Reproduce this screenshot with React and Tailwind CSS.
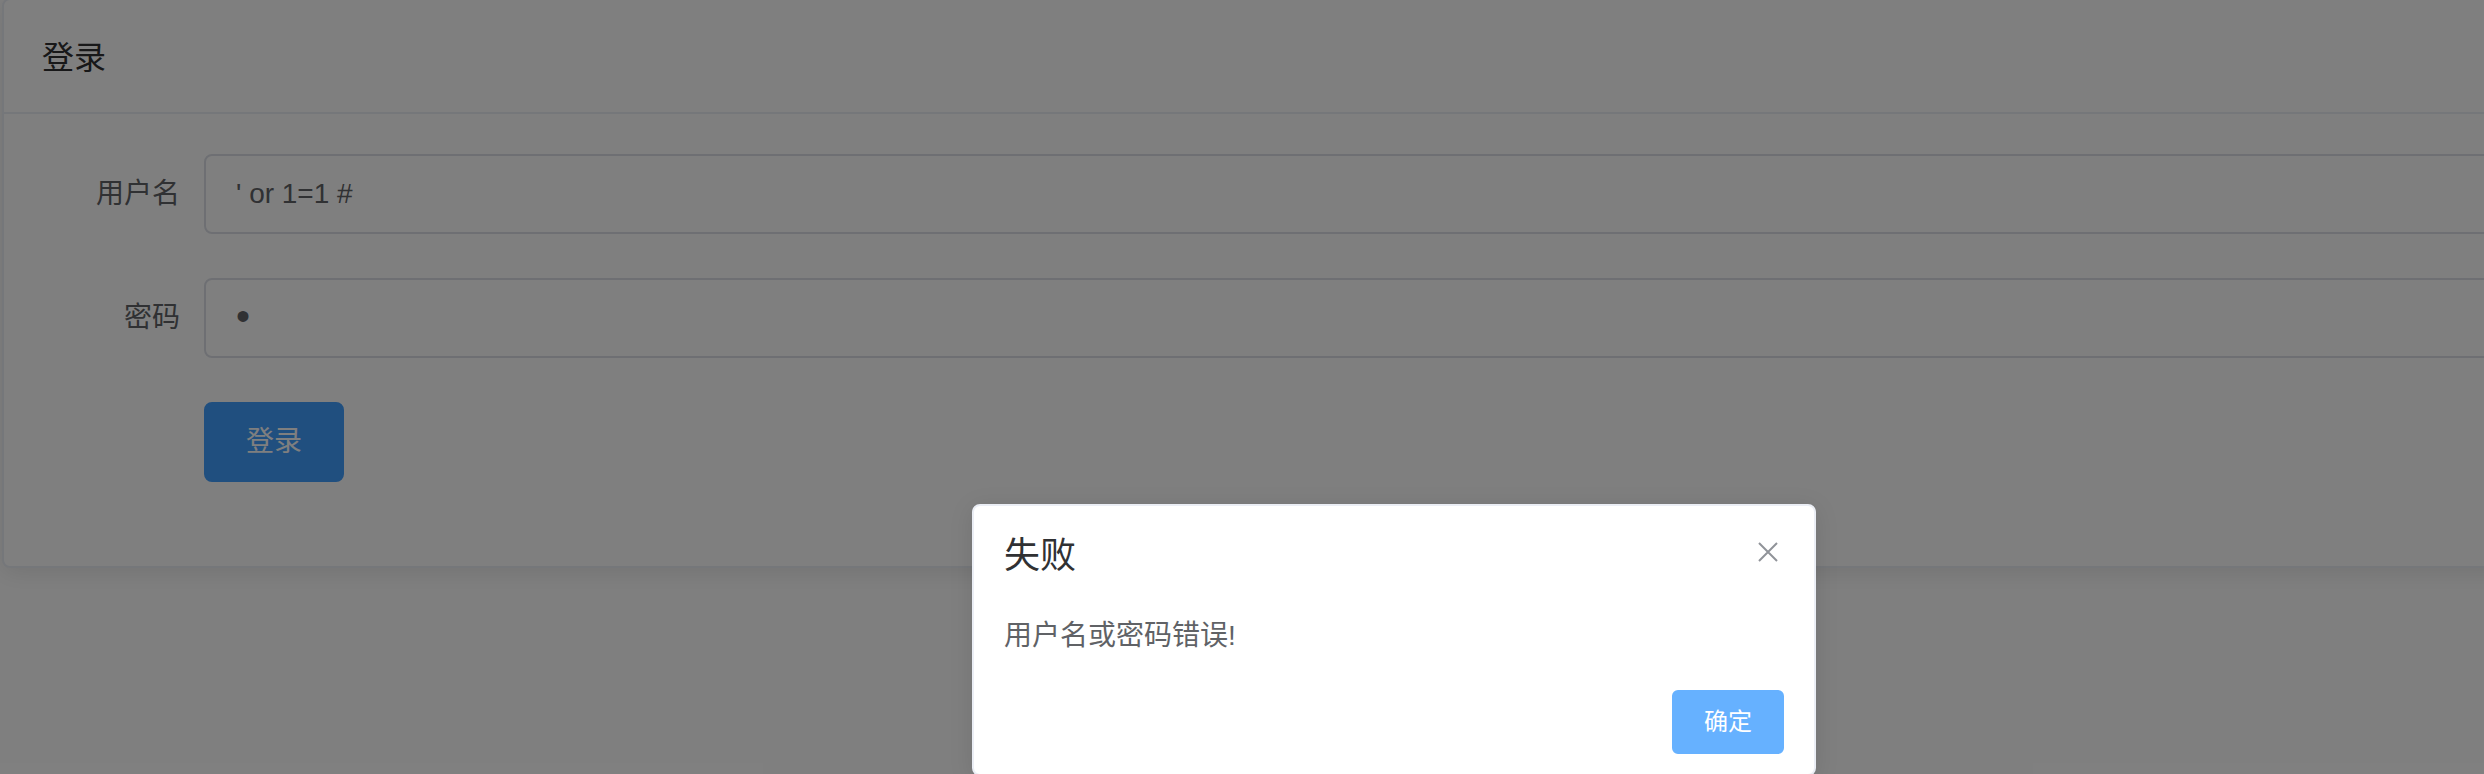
import React from 'react';

const FONT = "font-['Liberation_Sans','Noto_Sans_CJK_SC',sans-serif]";

// 表单行
function FormRow({ label, children }) {
  return (
    <div className="flex items-center h-[80px] mb-[44px]">
      <label className="w-[160px] pr-[24px] text-right text-[28px] text-[#606266]">{label}</label>
      <div className="flex-1">{children}</div>
    </div>
  );
}

function TextInput({ value }) {
  return (
    <div className="h-[80px] border-2 border-[#DCDFE6] rounded-[8px] bg-white px-[30px] flex items-center text-[28px] text-[#606266]">
      {value}
    </div>
  );
}

export default function App() {
  return (
    <div className={`relative w-[2484px] h-[774px] overflow-hidden bg-white ${FONT}`}>
      {/* 登录卡片 */}
      <div className="-mt-[2px] ml-[2px] w-[2600px] bg-white border-2 border-[#EBEEF5] rounded-[8px] shadow-[0_4px_24px_0_rgba(0,0,0,0.1)]">
        <div className="h-[114px] px-[38px] pt-[4px] flex items-center border-b-2 border-[#EBEEF5]">
          <span className="text-[32px] text-[#303133]">登录</span>
        </div>
        <div className="p-[40px] pb-[40px]">
          <FormRow label="用户名">
            <TextInput value="' or 1=1 #" />
          </FormRow>
          <FormRow label="密码">
            <TextInput value={<span className="text-[40px] leading-none -mt-[4px]">•</span>} />
          </FormRow>
          <div className="flex h-[80px] mb-[44px]">
            <div className="w-[160px]" />
            <button className="h-[80px] w-[140px] rounded-[8px] bg-[#409EFF] border-2 border-[#409EFF] text-white text-[28px]">
              登录
            </button>
          </div>
        </div>
      </div>

      {/* 遮罩 */}
      <div className="absolute inset-0 bg-black/50" />

      {/* 消息框 */}
      <div className="absolute left-[972px] top-[504px] w-[844px] bg-white border-2 border-[#EBEEF5] rounded-[8px] pb-[20px] shadow-[0_4px_24px_0_rgba(0,0,0,0.1)]">
        <div className="relative px-[30px] pt-[32px] pb-[18px]">
          <div className="text-[36px] leading-none text-[#303133]">失败</div>
          <button className="absolute top-[30px] right-[30px] w-[32px] h-[32px] flex items-center justify-center">
            <svg width="20" height="20" viewBox="0 0 20 20">
              <path d="M1 1 L19 19 M19 1 L1 19" stroke="#909399" strokeWidth="2" fill="none" />
            </svg>
          </button>
        </div>
        <div className="px-[30px] py-[20px] text-[28px] leading-[48px] text-[#606266]">
          用户名或密码错误!
        </div>
        <div className="px-[30px] pt-[10px] flex justify-end">
          <button className="h-[64px] px-[30px] rounded-[6px] bg-[#66b1ff] border-2 border-[#66b1ff] text-white text-[24px]">
            确定
          </button>
        </div>
      </div>
    </div>
  );
}
